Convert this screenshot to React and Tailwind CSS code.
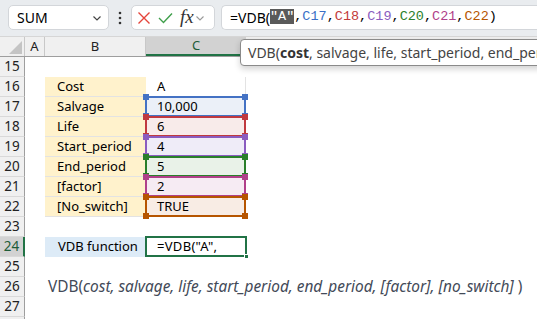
import React from "react";

const rows = [15, 16, 17, 18, 19, 20, 21, 22, 23, 24, 25, 26, 27, 28];

const tableData = {
  16: { b: "Cost", c: "A" },
  17: { b: "Salvage", c: "10,000", color: "#4472c4", fill: "bg-[#ebf0f8]" },
  18: { b: "Life", c: "6", color: "#c0393f", fill: "bg-[#f8ebea]" },
  19: { b: "Start_period", c: "4", color: "#8a5cc0", fill: "bg-[#efecf8]" },
  20: { b: "End_period", c: "5", color: "#2a7f2a", fill: "bg-[#e9f2e8]" },
  21: { b: "[factor]", c: "2", color: "#b0408a", fill: "bg-[#f6ebf3]" },
  22: { b: "[No_switch]", c: "TRUE", color: "#b65500", fill: "bg-[#f8ece4]" },
};

function Highlight({ color }) {
  const sq = "absolute w-[6px] h-[6px]";
  return (
    <div className="absolute -left-[1px] -top-[1px] -right-[1px] -bottom-[1px] pointer-events-none z-10">
      <div className="absolute inset-0 border-2" style={{ borderColor: color }} />
      <div className={sq + " -left-[2px] -top-[2px]"} style={{ background: color }} />
      <div className={sq + " -right-[2px] -top-[2px]"} style={{ background: color }} />
      <div className={sq + " -left-[2px] -bottom-[2px]"} style={{ background: color }} />
      <div className={sq + " -right-[2px] -bottom-[2px]"} style={{ background: color }} />
    </div>
  );
}

function Row({ n }) {
  const d = tableData[n];
  const isSel = n === 24;
  return (
    <div className="flex h-[20px]">
      <div
        className={
          "w-[25px] shrink-0 flex items-center justify-center text-[13.5px] border-b border-[#d9d9d9] " +
          (isSel
            ? "bg-[#d2d2d2] text-[#1e5c38] border-r-2 border-r-[#217346]"
            : "bg-[#f0f0f0] text-[#222] border-r border-r-[#9e9e9e]")
        }
      >
        {n}
      </div>
      <div className="w-[20px] shrink-0" />
      {d ? (
        <>
          <div className="w-[101px] shrink-0 bg-[#fff2cc] border-b border-[#e3e3e3] pl-[12px] flex items-center text-[13px] text-black">
            {d.b}
          </div>
          <div
            className={
              "w-[100px] shrink-0 relative flex items-center pl-[11px] text-[13px] text-black border-b border-r border-[#e3e3e3] " +
              (d.fill || "bg-white")
            }
          >
            {d.color && <Highlight color={d.color} />}
            <span className="relative z-20">{d.c}</span>
          </div>
        </>
      ) : n === 24 ? (
        <>
          <div className="w-[101px] shrink-0 bg-[#ddebf7] pl-[13px] flex items-center text-[13px] text-black">
            VDB function
          </div>
          <div className="w-[101px] shrink-0 relative flex items-center pl-[11px] text-[13px] text-black">
            <div className="absolute -left-[1px] -top-[1px] right-0 bottom-0 border-2 border-[#217346]" />
            <div className="absolute -right-[2px] -bottom-[2px] w-[5px] h-[5px] bg-[#217346] border border-white" />
            <span className="relative tracking-[0.3px]">=VDB("A",</span>
          </div>
        </>
      ) : n === 26 ? (
        <div className="flex items-center pl-[3px] text-[15.4px] text-[#434a58] whitespace-nowrap">
          VDB(<span className="italic">cost, salvage, life, start_period, end_period, [factor], [no_switch]</span>&nbsp;)
        </div>
      ) : null}
    </div>
  );
}

export default function App() {
  return (
    <div
      className="w-[537px] h-[319px] overflow-hidden bg-white relative"
      style={{ fontFamily: '"Noto Sans", "Open Sans", sans-serif' }}
    >
      {/* Toolbar */}
      <div className="h-[37px] bg-[#e9ecef] flex items-start pt-[5px] pl-[8px] gap-0 border-b border-[#d6d6d6]">
        <div className="w-[101px] h-[25px] bg-white rounded-[5px] border border-[#d3d6da] flex items-center justify-between pl-[8px] pr-[5px] text-[14px] text-black">
          <span>SUM</span>
          <svg width="12" height="12" viewBox="0 0 12 12" fill="none" stroke="#444" strokeWidth="1.2">
            <path d="M2.5 4.5 L6 8 L9.5 4.5" />
          </svg>
        </div>
        <div className="w-[22px] h-[25px] flex items-center justify-center">
          <svg width="4" height="14" viewBox="0 0 4 14">
            <circle cx="2" cy="2" r="1.3" fill="#333" />
            <circle cx="2" cy="7" r="1.3" fill="#333" />
            <circle cx="2" cy="12" r="1.3" fill="#333" />
          </svg>
        </div>
        <div className="w-[84px] h-[25px] bg-white rounded-[5px] border border-[#d3d6da] flex items-center pl-[5px]">
          <svg width="14" height="14" viewBox="0 0 14 14" fill="none" stroke="#e5443b" strokeWidth="1.4">
            <path d="M1.5 1.5 L12.5 12.5 M12.5 1.5 L1.5 12.5" />
          </svg>
          <svg className="ml-[7px]" width="15" height="14" viewBox="0 0 15 14" fill="none" stroke="#3f9f4b" strokeWidth="1.4">
            <path d="M1 7 L5.5 11.5 L14 2.5" />
          </svg>
          <span
            className="ml-[7px] italic text-[19px] text-[#333] leading-none pb-[2px]"
            style={{ fontFamily: '"Liberation Serif", serif' }}
          >
            fx
          </span>
          <svg className="ml-[1px]" width="10" height="10" viewBox="0 0 10 10" fill="none" stroke="#999" strokeWidth="1.1">
            <path d="M1.5 3.5 L5 7 L8.5 3.5" />
          </svg>
        </div>
        <div className="ml-[6px] flex-1 h-[25px] bg-white rounded-l-[5px] border border-r-0 border-[#d3d6da] flex items-center pl-[8px] text-[14px] text-black whitespace-nowrap">
          <span>=VDB(</span>
          <span style={{ fontFamily: '"Liberation Mono", monospace' }} className="text-[13.5px]">
            <span className="bg-[#5a5a5a] text-white">"A"</span>
            <span>,</span>
            <span className="text-[#3a6fc6]">C17</span>
            <span>,</span>
            <span className="text-[#c23a3a]">C18</span>
            <span>,</span>
            <span className="text-[#8a5cc0]">C19</span>
            <span>,</span>
            <span className="text-[#2a7f2a]">C20</span>
            <span>,</span>
            <span className="text-[#b0408a]">C21</span>
            <span>,</span>
            <span className="text-[#b65500]">C22</span>
            <span>)</span>
          </span>
        </div>
      </div>

      {/* Column headers */}
      <div className="flex h-[20px] bg-[#f0f0f0] border-b border-[#9e9e9e] text-[13px] text-[#222]">
        <div className="w-[25px] shrink-0 relative border-r border-[#c8c8c8]">
          <svg className="absolute right-[2px] bottom-[2px]" width="13" height="13" viewBox="0 0 13 13">
            <path d="M13 0 L13 13 L0 13 Z" fill="#c4c4c4" />
          </svg>
        </div>
        <div className="w-[20px] shrink-0 flex items-center justify-center border-r border-[#c8c8c8]">A</div>
        <div className="w-[101px] shrink-0 flex items-center justify-center border-r border-[#c8c8c8]">B</div>
        <div className="w-[100px] shrink-0 flex items-center justify-center bg-[#d2d2d2] text-[#1e5c38] border-b-2 border-[#217346]">
          C
        </div>
        <div className="flex-1" />
      </div>

      {/* Rows */}
      <div className="flex flex-col">
        {rows.map((n) => (
          <Row key={n} n={n} />
        ))}
      </div>

      {/* Tooltip */}
      <div className="absolute left-[240px] top-[39px] w-[320px] h-[27px] bg-white border border-[#8a8a8a] rounded-[4px] shadow-[0_3px_6px_rgba(0,0,0,0.18)] flex items-center pl-[7px] text-[14px] text-[#444] whitespace-nowrap z-30">
        VDB(<span className="font-bold text-[#333]">cost</span>, salvage, life, start_period, end_period
      </div>
    </div>
  );
}
